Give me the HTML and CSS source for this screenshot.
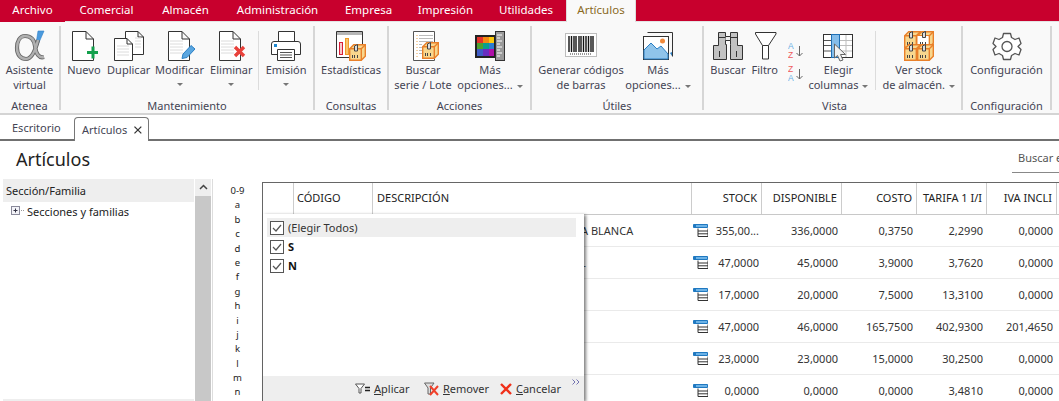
FILE: index.html
```html
<!DOCTYPE html>
<html lang="es">
<head>
<meta charset="utf-8">
<title>Artículos</title>
<link rel="stylesheet" href="styles.css">
</head>
<body>
<svg class="defs" width="0" height="0">
  <defs>
    <g id="box">
      <path d="M.7 4.700 L4.700 .7 H16.300 V12.300 L12.300 16.300 H.7Z" fill="#f8d78e" stroke="#e9802a" stroke-width="1.400"/>
      <path d="M.7 4.700 H12.300 V16.300 M12.300 4.700 L16.300 .7" fill="none" stroke="#e9802a" stroke-width="1.400"/>
      <path d="M5.500 7 V2 L8.500 .5 V7Z" fill="#ddd" stroke="#444"/>
      <path d="M3.500 11 v3 M5.500 11 v3 M8.500 11 v3" stroke="#444"/>
    </g>
    <g id="lines">
      <path d="M3 11 H16 M3 14 H16 M3 17 H16 M3 20 H16 M3 23 H16" stroke="#dcdcdc"/>
    </g>
    <g id="doc">
      <path d="M1.500 1.500 H15 L22.500 9 V30.500 H1.500Z M15 1.500 V9 H22.500" fill="#fff" stroke="#333"/>
    </g>
    <g id="rowicon">
      <path d="M5 4.500 V12.500 H15 V4.500 M5 7 H15 M5 9.800 H15" fill="#fff" stroke="#333"/>
      <path d="M.5 .5 H14.500 V3.500 H.5Z" fill="#6cb2e6" stroke="#1f78c0"/>
      <rect x="1" y="1" width="2" height="2" fill="#1f78c0"/>
    </g>
    <g id="check">
      <rect x=".5" y=".5" width="13" height="13" fill="#fff" stroke="#555"/>
      <path d="M3 7 L6 10 L11 4" fill="none" stroke="#555" stroke-width="1.200"/>
    </g>
  </defs>
</svg>

<nav class="menu">
  <span class="menu-item menu-first">Archivo</span>
  <span class="menu-item">Comercial</span>
  <span class="menu-item">Almacén</span>
  <span class="menu-item">Administración</span>
  <span class="menu-item">Empresa</span>
  <span class="menu-item">Impresión</span>
  <span class="menu-item">Utilidades</span>
  <span class="menu-item menu-active">Artículos</span>
</nav>

<section class="ribbon">
  <div class="group g-atenea">
    <div class="btns">
      <div class="btn w60">
        <svg class="ic" width="32" height="32" viewBox="0 0 32 32"><path d="M24 1 H30 L23 17 H21.500Z" fill="#4a9ade" stroke="#2f80c6" stroke-width=".6"/><path d="M30 27 C25 28.500 22 24 21 16 C20 9 16 6 11 6 C6 6 3 11 3 18 C3 25 7 29 12 29 C17 29 21 22 24 10" fill="none" stroke="#666" stroke-width="4.200"/><path d="M30 27 C25 28.500 22 24 21 16 C20 9 16 6 11 6 C6 6 3 11 3 18 C3 25 7 29 12 29 C17 29 21 22 24 10" fill="none" stroke="#b0b0b0" stroke-width="2.400"/></svg>
        <span class="lbl">Asistente</span><span class="lbl">virtual</span>
      </div>
    </div>
    <div class="gname">Atenea</div>
  </div>

  <div class="group g-mant">
    <div class="btns">
      <div class="btn w46">
        <svg class="ic" width="28" height="32" viewBox="0 0 28 32"><use href="#doc" x="1"/><path d="M23 16.500 V28.500 M17 22.500 H29" stroke="#13a04c" stroke-width="3" fill="none"/></svg>
        <span class="lbl">Nuevo</span>
      </div>
      <div class="btn w44">
        <svg class="ic" width="32" height="32" viewBox="0 0 32 32"><path d="M12.500 1.500 H25 L30.500 7 V24.500 H12.500Z M25 1.500 V7 H30.500" fill="#fff" stroke="#333"/><path d="M1.500 8.500 H14 L19.500 14 V30.500 H1.500Z M14 8.500 V14 H19.500" fill="#fff" stroke="#333"/><path d="M4 16 H16 M4 19 H16 M4 22 H16 M4 25 H16 M22 8 H28 M22 11 H28 M22 14 H28 M22 17 H28" stroke="#dcdcdc"/></svg>
        <span class="lbl">Duplicar</span>
      </div>
      <div class="btn w58">
        <svg class="ic" width="30" height="32" viewBox="0 0 30 32"><use href="#doc" x="2"/><use href="#lines" x="2"/><path d="M17 28.500 L18 24 L26 15.500 L30 19 L22 27.500Z" fill="#5aa6e0" stroke="#2a7fc4"/></svg>
        <span class="lbl">Modificar</span><span class="chev chev-solo"></span>
      </div>
      <div class="btn w46">
        <svg class="ic" width="30" height="32" viewBox="0 0 30 32"><use href="#doc" x="2"/><use href="#lines" x="2"/><path d="M19 17 L28 26 M28 17 L19 26" stroke="#e8403a" stroke-width="3.400" fill="none"/></svg>
        <span class="lbl">Eliminar</span><span class="chev chev-solo"></span>
      </div>
      <i class="inner-sep sep-mant"></i>
      <div class="btn w54">
        <svg class="ic" width="32" height="32" viewBox="0 0 32 32"><path d="M8.500 1.500 H24.500 V12 H8.500Z" fill="#fff" stroke="#333"/><path d="M1.500 14 Q1.500 11.500 4 11.500 H28 Q30.500 11.500 30.500 14 V24.500 H1.500Z" fill="#fff" stroke="#333"/><rect x="4" y="14" width="3" height="3" fill="#1e88d0"/><path d="M7.500 19.500 H24.500 V30.500 H7.500Z" fill="#fff" stroke="#333"/><path d="M10 22.500 H22 M10 25 H22 M10 27.500 H22" stroke="#555"/></svg>
        <span class="lbl">Emisión</span><span class="chev chev-solo"></span>
      </div>
    </div>
    <div class="gname">Mantenimiento</div>
  </div>

  <div class="group g-cons">
    <div class="btns">
      <div class="btn w73">
        <svg class="ic" width="32" height="32" viewBox="0 0 32 32"><path d="M1.500 1.500 H27.500 V27.500 H1.500Z" fill="#fff" stroke="#333"/><rect x="2" y="2" width="25" height="3" fill="#b5b5b5"/><rect x="4.500" y="12.500" width="3" height="12" fill="#f7c8c8" stroke="#d81e3a"/><rect x="10.500" y="8.500" width="3" height="16" fill="#fbc36b" stroke="#ee9a2a"/><use href="#box" x="14" y="14"/></svg>
        <span class="lbl">Estadísticas</span>
      </div>
    </div>
    <div class="gname">Consultas</div>
  </div>

  <div class="group g-acc">
    <div class="btns">
      <div class="btn w68">
        <svg class="ic" width="32" height="32" viewBox="0 0 32 32"><path d="M6.500 1.500 H27.500 V30.500 H6.500Z" fill="#fff" stroke="#555"/><path d="M12 5.500 H26 M12 8.500 H26 M12 11.500 H26 M12 14.500 H15 M12 17.500 H15 M12 20.500 H15 M12 23.500 H15" stroke="#bbb"/><path d="M10 5 V27" stroke="#e8a24a" stroke-dasharray="1 2"/><use href="#box" x="15" y="12"/></svg>
        <span class="lbl">Buscar</span><span class="lbl">serie / Lote</span>
      </div>
      <div class="btn w66">
        <svg class="ic" width="32" height="32" viewBox="0 0 32 32"><rect x="1" y="5" width="20" height="23" fill="#222"/><rect x="3" y="7" width="6" height="6" fill="#e4322b"/><rect x="9" y="7" width="6" height="6" fill="#f58a12"/><rect x="15" y="7" width="5" height="6" fill="#fbc80c"/><rect x="3" y="13" width="6" height="6" fill="#4da12e"/><rect x="9" y="13" width="6" height="6" fill="#0b9f8e"/><rect x="15" y="13" width="5" height="6" fill="#2d7bd0"/><rect x="3" y="19" width="6" height="7" fill="#3f5cc6"/><rect x="9" y="19" width="6" height="7" fill="#6a2dc0"/><rect x="15" y="19" width="5" height="7" fill="#b00fa8"/><rect x="21.500" y="1.500" width="9" height="29" fill="#9a9a9a" stroke="#333"/><path d="M23 5 h5 M23 8 h3 M23 11 h5 M23 14 h3 M23 17 h5 M23 20 h3 M23 23 h5 M23 26 h3" stroke="#fff"/></svg>
        <span class="lbl">Más</span><span class="lbl">opciones...<span class="chev"></span></span>
      </div>
    </div>
    <div class="gname">Acciones</div>
  </div>

  <div class="group g-util">
    <div class="btns">
      <div class="btn w98">
        <svg class="ic" width="34" height="32" viewBox="0 0 34 32"><rect x="1.500" y="3.500" width="31" height="23" fill="#fff" stroke="#bdbdbd"/><path d="M5 6 V22 M7.500 6 V22 M10 6 V22 M12 6 V22 M15 6 V22 M17 6 V22 M19.500 6 V22 M22 6 V22 M24.500 6 V22 M27 6 V22 M29 6 V22" stroke="#111" stroke-width="1.400"/><path d="M6 24 H28" stroke="#333" stroke-dasharray="1 1"/></svg>
        <span class="lbl">Generar códigos</span><span class="lbl">de barras</span>
      </div>
      <div class="btn w56">
        <svg class="ic" width="32" height="32" viewBox="0 0 32 32"><path d="M5.500 2.500 H30.500 V26.500" fill="none" stroke="#333"/><path d="M28 23 L30 26 V22Z" fill="#2a7fc4"/><rect x="1.500" y="6.500" width="25" height="23" fill="#fff" stroke="#333"/><path d="M2 28.500 V20 L9 13 L15 19 L19 16 L26 24 V29 H2Z" fill="#90c4ea" stroke="#2a7fc4"/><circle cx="20.500" cy="11" r="2.500" fill="#f28a3a"/></svg>
        <span class="lbl">Más</span><span class="lbl">opciones...<span class="chev"></span></span>
      </div>
    </div>
    <div class="gname">Útiles</div>
  </div>

  <div class="group g-vista">
    <div class="btns">
      <div class="btn w40">
        <svg class="ic" width="30" height="32" viewBox="0 0 30 32"><path d="M5.500 2.500 H12.500 V14.500 H13.500 V29.500 H.5 V15.500 H5.500Z M24.500 2.500 H17.500 V14.500 H17.500 V29.500 H29.500 V15.500 H24.500Z" fill="#c2c2c2" stroke="#333"/><path d="M12.500 10.500 H17.500 V6.500 H12.500 M5.500 7.500 H12.500 M17.500 7.500 H24.500 M6.500 21 V27 M23.500 21 V27" fill="#eee" stroke="#333"/></svg>
        <span class="lbl">Buscar</span>
      </div>
      <div class="btn w34">
        <svg class="ic" width="24" height="32" viewBox="0 0 24 32"><path d="M2.500 2.500 H23 V4 L15.500 15.500 V29 H9.500 V15.500 L2.500 4Z M9.500 15.500 H15.500" fill="#fff" stroke="#333"/></svg>
        <span class="lbl">Filtro</span>
      </div>
      <div class="sort">
        <svg width="16" height="16" viewBox="0 0 16 16"><text x="0" y="6.800" class="sort-a">A</text><text x="0" y="15.500" class="sort-z">Z</text><path d="M11.500 4 V14 M8.500 11 L11.500 14 L14.500 11" fill="none" stroke="#666"/></svg>
        <svg width="16" height="16" viewBox="0 0 16 16"><text x="0" y="6.800" class="sort-z">Z</text><text x="0" y="15.500" class="sort-a">A</text><path d="M11.500 4 V14 M8.500 11 L11.500 14 L14.500 11" fill="none" stroke="#666"/></svg>
      </div>
      <div class="btn w58">
        <svg class="ic" width="32" height="32" viewBox="0 0 32 32"><rect x="1.500" y="4.500" width="29" height="23" fill="#fff" stroke="#333"/><path d="M17 10.500 H30 M17 15.500 H30 M17 21 H30 M24 5 V27" stroke="#bdbdbd"/><path d="M2 10.500 H9 M2 15.500 H9 M2 21 H9" stroke="#555"/><rect x="9.500" y="4.500" width="8" height="23" fill="#85bdea" stroke="#1f6fb5"/><path d="M12.500 14 V28 L15.500 25.500 L18 31 L21 30 L18.500 24.500 L23.500 24.500Z" fill="#f2f2f2" stroke="#666"/></svg>
        <span class="lbl">Elegir</span><span class="lbl">columnas<span class="chev"></span></span>
      </div>
      <i class="inner-sep sep-vista"></i>
      <div class="btn w85">
        <svg class="ic" width="30" height="32" viewBox="0 0 30 32"><use href="#box" x="0" y="1"/><use href="#box" x="13" y="1"/><rect x="13.500" y="6" width="11" height="11" fill="#fff"/><path d="M18.500 7.500 V3 L21.500 1.500 V7.500Z" fill="#ddd" stroke="#444"/><path d="M16.500 12 v3 M18.500 12 v3 M21.500 12 v3" stroke="#444"/><use href="#box" x="0" y="14"/><use href="#box" x="13" y="14"/></svg>
        <span class="lbl">Ver stock</span><span class="lbl">de almacén.<span class="chev"></span></span>
      </div>
    </div>
    <div class="gname">Vista</div>
  </div>

  <div class="group g-conf">
    <div class="btns">
      <div class="btn w88">
        <svg class="ic" width="30" height="32" viewBox="0 0 30 32"><path d="M11.500 3.500 H18.500 L19.500 7.500 L23 9.500 L27 8 L29 13.500 L26 16.500 L29 19.500 L27 25 L23 23.500 L19.500 25.500 L18.500 29.500 H11.500 L10.500 25.500 L7 23.500 L3 25 L1 19.500 L4 16.500 L1 13.500 L3 8 L7 9.500 L10.500 7.500Z" fill="#fff" stroke="#555" stroke-width="1.300" stroke-linejoin="round"/><circle cx="15" cy="16.500" r="5" fill="#fff" stroke="#555" stroke-width="1.300"/></svg>
        <span class="lbl">Configuración</span>
      </div>
    </div>
    <div class="gname">Configuración</div>
  </div>
</section>

<div class="doc-tabs">
  <span class="doc-tab doc-first">Escritorio</span>
  <span class="doc-tab doc-active">Artículos
    <svg width="10" height="10" viewBox="0 0 10 10"><path d="M1.500 1.500 L8.500 8.500 M8.500 1.500 L1.500 8.500" stroke="#333" stroke-width="1.300"/></svg>
  </span>
</div>

<header class="title-row">
  <h1 class="title">Artículos</h1>
  <div class="search">Buscar e</div>
</header>

<main class="main">
  <aside class="tree-panel">
    <div class="tree-head">Sección/Familia</div>
    <div class="tree-node">
      <svg width="14" height="10" viewBox="0 0 14 10"><rect x="0.500" y="0.500" width="8" height="8" fill="#f3f3f8" stroke="#8a8a9a"/><path d="M2.500 4.500 H6.500 M4.500 2.500 V6.500" stroke="#334"/><path d="M10 4.500 h1 M12 4.500 h1" stroke="#999"/></svg>
      <span>Secciones y familias</span>
    </div>
    <div class="tree-foot"></div>
  </aside>
  <div class="vscroll">
    <div class="vscroll-btn"><svg width="9" height="6" viewBox="0 0 9 6"><path d="M1 5 L4.500 1.500 L8 5" fill="none" stroke="#444" stroke-width="1.500"/></svg></div>
    <div class="vscroll-track"></div>
  </div>
  <div class="alpha">
    <span>0-9</span><span>a</span><span>b</span><span>c</span><span>d</span><span>e</span><span>f</span><span>g</span><span>h</span><span>i</span><span>j</span><span>k</span><span>l</span><span>m</span><span>n</span>
  </div>
  <div class="table">
    <div class="row head">
      <div class="cell"></div>
      <div class="cell">CÓDIGO</div>
      <div class="cell">DESCRIPCIÓN</div>
      <div class="cell num">STOCK</div>
      <div class="cell num">DISPONIBLE</div>
      <div class="cell num">COSTO</div>
      <div class="cell num">TARIFA 1 I/I</div>
      <div class="cell num">IVA INCLI</div>
    </div>
    <div class="row"><div class="cell"></div><div class="cell"></div><div class="cell desc">A BLANCA</div><div class="cell num stock"><svg class="ri" width="15" height="13" viewBox="0 0 15 13"><use href="#rowicon"/></svg><span>355,00...</span></div><div class="cell num">336,0000</div><div class="cell num">0,3750</div><div class="cell num">2,2990</div><div class="cell num">0,0000</div></div>
    <div class="row"><div class="cell"></div><div class="cell"></div><div class="cell desc desc-l">L</div><div class="cell num stock"><svg class="ri" width="15" height="13" viewBox="0 0 15 13"><use href="#rowicon"/></svg><span>47,0000</span></div><div class="cell num">45,0000</div><div class="cell num">3,9000</div><div class="cell num">3,7620</div><div class="cell num">0,0000</div></div>
    <div class="row"><div class="cell"></div><div class="cell"></div><div class="cell desc"></div><div class="cell num stock"><svg class="ri" width="15" height="13" viewBox="0 0 15 13"><use href="#rowicon"/></svg><span>17,0000</span></div><div class="cell num">20,0000</div><div class="cell num">7,5000</div><div class="cell num">13,3100</div><div class="cell num">0,0000</div></div>
    <div class="row"><div class="cell"></div><div class="cell"></div><div class="cell desc"></div><div class="cell num stock"><svg class="ri" width="15" height="13" viewBox="0 0 15 13"><use href="#rowicon"/></svg><span>47,0000</span></div><div class="cell num">46,0000</div><div class="cell num">165,7500</div><div class="cell num">402,9300</div><div class="cell num">201,4650</div></div>
    <div class="row"><div class="cell"></div><div class="cell"></div><div class="cell desc"></div><div class="cell num stock"><svg class="ri" width="15" height="13" viewBox="0 0 15 13"><use href="#rowicon"/></svg><span>23,0000</span></div><div class="cell num">23,0000</div><div class="cell num">15,0000</div><div class="cell num">30,2500</div><div class="cell num">0,0000</div></div>
    <div class="row"><div class="cell"></div><div class="cell"></div><div class="cell desc"></div><div class="cell num stock"><svg class="ri" width="15" height="13" viewBox="0 0 15 13"><use href="#rowicon"/></svg><span>0,0000</span></div><div class="cell num">0,0000</div><div class="cell num">0,0000</div><div class="cell num">3,4810</div><div class="cell num">0,0000</div></div>

    <div class="popup">
      <div class="pop-list">
        <label class="pop-item pop-hover"><svg class="chk" width="14" height="14" viewBox="0 0 14 14"><use href="#check"/></svg>(Elegir Todos)</label>
        <label class="pop-item pop-bold"><svg class="chk" width="14" height="14" viewBox="0 0 14 14"><use href="#check"/></svg>S</label>
        <label class="pop-item pop-bold"><svg class="chk" width="14" height="14" viewBox="0 0 14 14"><use href="#check"/></svg>N</label>
      </div>
      <div class="pop-foot">
        <span class="pop-act act-apply"><svg width="15" height="11" viewBox="0 0 15 11"><path d="M.5 1 H9.500 L6 5.500 V10 H4 V5.500Z" fill="#fff" stroke="#555"/><path d="M10 4.500 H15 M10 7.500 H15" stroke="#222" stroke-width="1.500"/></svg><span><u>A</u>plicar</span></span>
        <span class="pop-act act-remove"><svg width="15" height="14" viewBox="0 0 15 14"><path d="M.5 1 H10 L6.500 6 V12 H4 V6Z" fill="#ddd" stroke="#666"/><path d="M6 4 L14 13 M14 4 L6 13" stroke="#f0402a" stroke-width="2"/></svg><span><u>R</u>emover</span></span>
        <span class="pop-act act-cancel"><svg width="12" height="12" viewBox="0 0 12 12"><path d="M1 1 L11 11 M11 1 L1 11" stroke="#f0301a" stroke-width="2.400"/></svg><span><u>C</u>ancelar</span></span>
        <svg class="more" width="8" height="6" viewBox="0 0 8 6"><path d="M.5 .5 L3 3 L.5 5.500 M4.500 .5 L7 3 L4.500 5.500" fill="none" stroke="#7272b0"/></svg>
      </div>
    </div>
  </div>
</main>
</body>
</html>
```
FILE: styles.css
```css
* { box-sizing: border-box; }
html, body { margin: 0; height: 401px; overflow: hidden; background: #fff; }
body { font-family: "Noto Sans", "Open Sans", sans-serif; font-size: 11px; color: #222; }
.defs { position: absolute; }

.menu { display: grid; grid-template-columns: 65px 83px 75px 109px 73px 81px 80px 70px 1fr; height: 22px; background: #c8002d; color: #fff; font-size: 11.500px; line-height: 20px; text-align: center; }
.menu-item { display: block; border-bottom: 1px solid #e4e4e4; }
.menu-first { border-bottom: 0; }
.menu-active { background: #f9f9f9; color: #8a6a1e; border: 1px solid #ddd; border-width: 0 1px; }
.menu::after { content: ""; border-bottom: 1px solid #e4e4e4; }

.ribbon { display: flex; height: 93px; padding-top: 4px; background: #f9f9f9; border-bottom: 2px solid #d4d4d4; color: #444454; }
.group { display: flex; flex-direction: column; height: 84px; border-right: 2px solid #d6d6d6; }
.g-atenea { width: 61px; }
.g-mant { width: 254px; }
.g-cons { width: 74px; }
.g-acc { width: 143px; }
.g-util { width: 172px; }
.g-vista { width: 259px; padding-left: 4px; }
.g-conf { width: 89px; }
.btns { display: flex; height: 73px; }
.btn { display: flex; flex-direction: column; align-items: center; padding-top: 4px; white-space: nowrap; }
.ic { display: block; height: 32px; flex: none; }
.lbl { display: block; line-height: 15px; height: 15px; }
.w34 { width: 34px; } .w40 { width: 40px; } .w44 { width: 44px; } .w46 { width: 46px; }
.w54 { width: 54px; } .w56 { width: 56px; } .w58 { width: 58px; } .w60 { width: 60px; } .w66 { width: 66px; }
.w68 { width: 68px; } .w73 { width: 73px; } .w85 { width: 85px; } .w88 { width: 88px; } .w98 { width: 98px; }
.chev { display: inline-block; width: 0; height: 0; margin-left: 4px; border: 3px solid transparent; border-top: 3px solid #777; border-bottom: 0; vertical-align: middle; }
.chev-solo { margin: 6px 0 0; }
.inner-sep { display: block; width: 1px; height: 59px; margin-top: 5px; background: #dcdcdc; }
.sep-mant { margin-left: 4px; }
.sep-vista { margin-left: 8px; }
.sort { display: flex; flex-direction: column; align-items: center; gap: 7px; width: 28px; padding-top: 16px; }
.sort-a { font-family: "Liberation Sans", sans-serif; font-size: 8.500px; fill: #6aaee4; }
.sort-z { font-family: "Liberation Sans", sans-serif; font-size: 8.500px; fill: #ee5c5c; }
.gname { height: 11px; text-align: center; line-height: 14px; }

.doc-tabs { display: flex; height: 26px; border-bottom: 2px solid #707070; padding-left: 12px; }
.doc-tab { line-height: 26px; color: #444454; }
.doc-first { width: 62px; }
.doc-active { display: flex; align-items: center; gap: 6px; height: 24px; margin-top: 2px; padding: 0 5px 0 7px; width: 75px; line-height: 24px; border: 1px solid #777; border-bottom: 0; border-radius: 4px 4px 0 0; background: #fff; }

.title-row { display: flex; justify-content: space-between; height: 38px; }
.title { margin: 6px 0 0 16px; font-size: 18px; font-weight: 400; line-height: 24px; color: #222; }
.search { width: 47px; height: 32px; padding: 9px 0 0 6px; border-bottom: 1px solid #888; color: #555; line-height: 16px; white-space: nowrap; overflow: hidden; }

.main { display: flex; height: 222px; }
.tree-panel { position: relative; width: 191px; margin-left: 3px; }
.tree-head { height: 23px; padding-left: 3px; background: #eee; line-height: 23px; }
.tree-node { display: flex; align-items: center; gap: 2px; height: 18px; margin: 0 0 0 8px; }
.tree-foot { position: absolute; left: 0; right: 0; bottom: 0; height: 2px; background: #eee; }
.vscroll { display: flex; flex-direction: column; width: 16px; margin-left: 1px; }
.vscroll-btn { display: flex; justify-content: center; padding-top: 5px; height: 17px; background: #eee; }
.vscroll-track { flex: 1; background: #c8c8c8; }
.alpha { display: flex; flex-direction: column; align-items: center; width: 50px; margin-left: 1px; padding-top: 5px; border-left: 1px solid #ddd; font-size: 9.500px; line-height: 14.400px; color: #222; }
.alpha span { display: block; height: 14.400px; }
.table { position: relative; flex: 1; margin-top: 3px; border-top: 1px solid #666; border-left: 1px solid #666; }
.row { display: grid; grid-template-columns: 31px 79px 319px 70px 80px 75px 70px 70px; height: 32px; border-bottom: 1px solid #eaeaea; align-items: center; color: #333; }
.cell { padding: 0 4px; white-space: nowrap; overflow: hidden; }
.num { text-align: right; padding-right: 4px; }
.stock { display: flex; align-items: center; justify-content: space-between; padding-left: 1px; padding-right: 3px; }
.ri { flex: none; }
.desc { padding-left: 208px; }
.desc-l { padding-left: 207px; }
.head { border-bottom-color: #c8c8c8; color: #222; }
.head .cell { height: 100%; line-height: 30px; border-right: 1px solid #ccc; }
.head .cell:nth-child(2) { padding-left: 3px; }
.popup { position: absolute; left: 0; top: 31px; width: 321px; height: 187px; display: flex; flex-direction: column; background: #fff; box-shadow: 2px 1px 3px rgba(0,0,0,.5); }
.pop-list { flex: 1; padding: 4px 8px 0 4px; }
.pop-item { display: flex; align-items: center; gap: 4px; height: 19px; padding-left: 3px; color: #333; }
.pop-hover { background: #eee; }
.pop-bold { font-weight: 700; color: #111; }
.pop-foot { position: relative; display: flex; align-items: center; height: 25px; background: #eee; padding-left: 92px; color: #333; }
.pop-act { display: flex; align-items: center; gap: 4px; white-space: nowrap; }
.act-apply { width: 69px; }
.act-remove { width: 76px; }
.more { position: absolute; left: 309px; top: 3px; }
```
